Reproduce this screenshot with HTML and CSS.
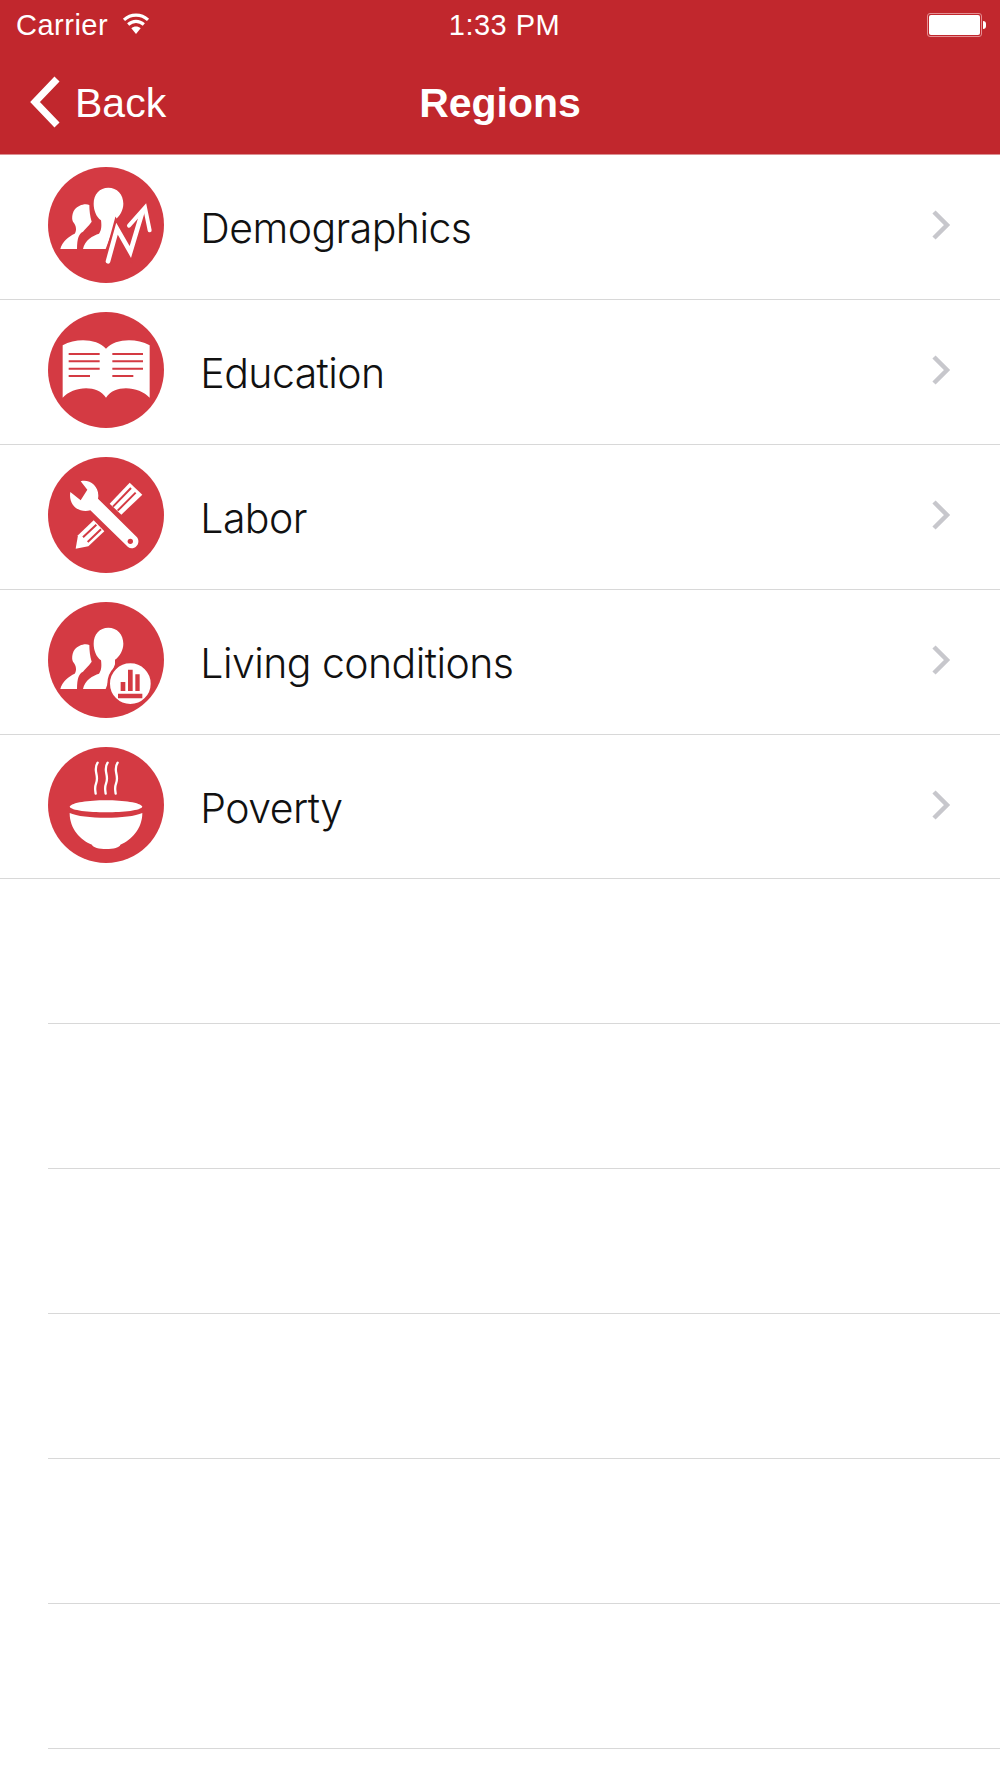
FILE: index.html
```html
<!DOCTYPE html>
<html lang="en">
<head>
  <meta charset="UTF-8" />
  <title>Regions</title>
  <link rel="stylesheet" href="styles.css">
</head>
<body>
  <div class="app">
    <header class="header">
      <div class="status-bar">
        <div class="carrier">
          <span>Carrier</span>
          <svg class="wifi" viewBox="0 0 26 22">
            <path class="wifi-arc" d="M1.5 7.5C8 1.5 18 1.5 24.5 7.5"/>
            <path class="wifi-arc" d="M5.5 12C10 8 16 8 20.5 12"/>
            <path class="wifi-dot" d="M8.5 15.5C11 13.3 15 13.3 17.5 15.5L13 21Z"/>
          </svg>
        </div>
        <div class="clock">1:33 PM</div>
        <div class="battery">
          <div class="battery-body"><div class="battery-level"></div></div>
          <div class="battery-nub"></div>
        </div>
      </div>
      <nav class="navbar">
        <a class="back" href="#">
          <svg class="back-icon" viewBox="0 0 34 56">
            <polyline points="30,4 8,27 30,50"/>
          </svg>
          <span>Back</span>
        </a>
        <h1>Regions</h1>
      </nav>
    </header>

    <ul class="list">
      <li class="row">
        <svg class="topic-icon" viewBox="55 50 348 348">
          <circle class="disc" cx="229" cy="224" r="174"/>
          <path class="white" d="M236 112C262 112 281 132 281 160C281 180 270 198 256 208L256 222L228 296L160 296C165 270 190 255 208 250C216 240 216 225 214 210C200 200 192 180 192 160C192 132 210 112 236 112Z"/>
          <path class="white" d="M150 166C160 161 172 160 179 164C179 180 181 198 186 214C176 228 166 236 160 244C148 250 142 262 142 296L92 296C98 272 118 258 135 250C142 240 140 225 130 214C125 205 126 175 150 166Z"/>
          <polyline class="halo" points="235,333 262,235 302,305 338,185"/>
          <polyline class="line" points="235,333 262,235 302,305 338,185"/>
          <polyline class="line thin" points="298,226 346,172 360,240"/>
        </svg>
        <span class="label">Demographics</span>
        <svg class="chevron" viewBox="0 0 20 32"><polyline points="3,3 16,16 3,29"/></svg>
      </li>
      <li class="row">
        <svg class="topic-icon" viewBox="55 35 348 348">
          <circle class="disc" cx="229" cy="209" r="174"/>
          <path class="white" d="M99 135C140 112 202 115 229 145C256 115 318 112 360 135L360 292C330 258 255 250 229 292C203 250 128 258 99 292Z"/>
          <path class="text-lines" d="M117 161H210M117 183H210M117 205H210M117 227H181M248 161H340M248 183H340M248 205H340M248 227H311"/>
        </svg>
        <span class="label">Education</span>
        <svg class="chevron" viewBox="0 0 20 32"><polyline points="3,3 16,16 3,29"/></svg>
      </li>
      <li class="row">
        <svg class="topic-icon" viewBox="55 35 348 348">
          <circle class="disc" cx="229" cy="209" r="174"/>
          <path class="white" d="M240 175L300 112L338 148L275 208Z"/>
          <path class="white" d="M138 310L145 270L192 225L224 258L176 303Z"/>
          <path class="text-lines" d="M250 184L304 128M264 196L318 142M160 276L200 238M174 290L214 252"/>
          <path class="white" d="M153 108C180 100 212 125 205 160L322 276C336 295 312 318 295 305L182 195C150 205 115 180 122 140L153 165L173 133Z"/>
          <circle class="hole" cx="302" cy="288" r="8"/>
        </svg>
        <span class="label">Labor</span>
        <svg class="chevron" viewBox="0 0 20 32"><polyline points="3,3 16,16 3,29"/></svg>
      </li>
      <li class="row">
        <svg class="topic-icon" viewBox="55 35 348 348">
          <circle class="disc" cx="229" cy="209" r="174"/>
          <path class="white" d="M236 112C262 112 281 132 281 160C281 180 270 198 256 208L256 222L228 296L160 296C165 270 190 255 208 250C216 240 216 225 214 210C200 200 192 180 192 160C192 132 210 112 236 112Z"/>
          <path class="white" d="M150 166C160 161 172 160 179 164C179 180 181 198 186 214C176 228 166 236 160 244C148 250 142 262 142 296L92 296C98 272 118 258 135 250C142 240 140 225 130 214C125 205 126 175 150 166Z"/>
          <circle class="white chart-disc" cx="302" cy="280" r="65"/>
          <path class="disc" d="M273 275H287V302H273ZM295 238H309V302H295ZM317 252H330V302H317ZM265 310H338V324H265Z"/>
        </svg>
        <span class="label">Living conditions</span>
        <svg class="chevron" viewBox="0 0 20 32"><polyline points="3,3 16,16 3,29"/></svg>
      </li>
      <li class="row">
        <svg class="topic-icon" viewBox="55 35 348 348">
          <circle class="disc" cx="229" cy="209" r="174"/>
          <path class="steam" d="M204 82C188 105 210 120 199 145C194 158 197 165 198 175M234 82C218 105 240 120 229 145C224 158 227 165 228 175M264 82C248 105 270 120 259 145C254 158 257 165 258 175"/>
          <path class="white" d="M120 214C130 188 328 188 338 214C330 236 128 236 120 214Z"/>
          <path class="white" d="M120 233C160 252 298 252 338 233C338 280 305 315 272 328C270 345 190 345 187 328C152 315 120 280 120 233Z"/>
        </svg>
        <span class="label">Poverty</span>
        <svg class="chevron" viewBox="0 0 20 32"><polyline points="3,3 16,16 3,29"/></svg>
      </li>
      <li class="row empty"></li>
      <li class="row empty"></li>
      <li class="row empty"></li>
      <li class="row empty"></li>
      <li class="row empty"></li>
      <li class="row empty"></li>
    </ul>
  </div>
</body>
</html>
```

FILE: styles.css
```css
:root {
  --nav: #c1272d;
  --disc: #d43a43;
  --line: #d8d8d8;
  --chevron: #c7c7cc;
}

html, body {
  margin: 0;
  padding: 0;
  background: #fff;
}

.app {
  width: 1000px;
  height: 1778px;
  overflow: hidden;
  font-family: "Liberation Sans", Arial, sans-serif;
}

.header {
  height: 155px;
  box-sizing: border-box;
  background-color: var(--nav);
  border-bottom: 1px solid #dc8f92;
  color: #fff;
}

.status-bar {
  height: 48px;
  display: grid;
  grid-template-columns: 1fr auto 1fr;
  align-items: center;
  padding: 3px 14px 0 16px;
  box-sizing: border-box;
  font-size: 29px;
  letter-spacing: 0.5px;
}

.carrier {
  display: flex;
  align-items: center;
  gap: 14px;
}

.wifi {
  width: 28px;
  height: 23px;
  margin-top: -5px;
}

.wifi-arc {
  fill: none;
  stroke: #fff;
  stroke-width: 3;
}

.wifi-dot {
  fill: #fff;
}

.clock {
  margin-left: 7px;
}

.battery {
  display: flex;
  align-items: center;
  justify-content: flex-end;
  margin-top: -2px;
}

.battery-body {
  width: 55px;
  height: 24px;
  box-sizing: border-box;
  padding: 1px;
  border: 1px solid #e48f93;
  border-radius: 3px;
}

.battery-level {
  height: 100%;
  background: #fff;
  border-radius: 2px;
}

.battery-nub {
  width: 3px;
  height: 8px;
  margin-left: 1px;
  background: #fff;
  border-radius: 0 4px 4px 0;
}

.navbar {
  height: 106px;
  display: grid;
  grid-template-columns: 1fr auto 1fr;
  align-items: center;
  padding-top: 4px;
  box-sizing: border-box;
}

.navbar h1 {
  margin: 0;
  padding-top: 1px;
  font-size: 41px;
  font-weight: 700;
}

.back {
  display: flex;
  align-items: center;
  gap: 14px;
  padding-left: 27px;
  color: #fff;
  text-decoration: none;
  font-size: 41px;
}

.back-icon {
  width: 34px;
  height: 56px;
}

.back-icon polyline {
  fill: none;
  stroke: #fff;
  stroke-width: 7;
}

.list {
  margin: 0;
  padding: 0;
  list-style: none;
}

.row {
  height: 144.9px;
  box-sizing: border-box;
  display: flex;
  align-items: center;
  padding: 0 49px 3px 48.3px;
  border-bottom: 1px solid var(--line);
}

.row.empty {
  margin-left: 48.3px;
  padding: 0;
}

.topic-icon {
  width: 116px;
  height: 116px;
  flex: none;
}

.label {
  flex: 1;
  margin-left: 36px;
  padding-top: 5px;
  font-family: Inter, "Liberation Sans", sans-serif;
  font-weight: 300;
  font-size: 41px;
  letter-spacing: -0.55px;
  color: #111;
}

.chevron {
  width: 20px;
  height: 32px;
}

.chevron polyline {
  fill: none;
  stroke: var(--chevron);
  stroke-width: 4.5;
}

.disc, .hole {
  fill: var(--disc);
}

.white {
  fill: #fff;
}

.chart-disc {
  stroke: var(--disc);
  stroke-width: 8;
}

.text-lines {
  fill: none;
  stroke: var(--disc);
  stroke-width: 6;
}

.steam {
  fill: none;
  stroke: #fff;
  stroke-width: 7;
  stroke-linecap: round;
}

.line {
  fill: none;
  stroke: #fff;
  stroke-width: 14;
  stroke-linecap: round;
  stroke-linejoin: miter;
}

.line.thin {
  stroke-width: 12;
}

.halo {
  fill: none;
  stroke: var(--disc);
  stroke-width: 28;
}
```
